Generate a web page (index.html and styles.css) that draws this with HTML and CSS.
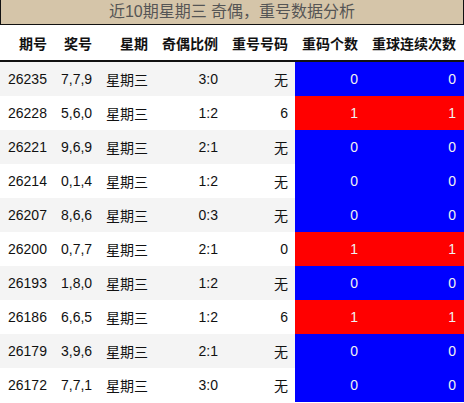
FILE: index.html
```html
<!DOCTYPE html>
<html lang="zh">
<head>
<meta charset="utf-8">
<link rel="stylesheet" href="styles.css">
</head>
<body>
<div class="wrap">
  <div class="title">近10期星期三 奇偶，重号数据分析</div>
  <table class="grid">
    <colgroup>
      <col class="c1"><col class="c2"><col class="c3"><col class="c4"><col class="c5"><col class="c6"><col class="c7">
    </colgroup>
    <thead>
      <tr><th>期号</th><th>奖号</th><th>星期</th><th>奇偶比例</th><th>重号号码</th><th>重码个数</th><th>重球连续次数</th></tr>
    </thead>
    <tbody>
      <tr><td>26235</td><td>7,7,9</td><td>星期三</td><td>3:0</td><td>无</td><td class="b">0</td><td class="b">0</td></tr>
      <tr><td>26228</td><td>5,6,0</td><td>星期三</td><td>1:2</td><td>6</td><td class="r">1</td><td class="r">1</td></tr>
      <tr><td>26221</td><td>9,6,9</td><td>星期三</td><td>2:1</td><td>无</td><td class="b">0</td><td class="b">0</td></tr>
      <tr><td>26214</td><td>0,1,4</td><td>星期三</td><td>1:2</td><td>无</td><td class="b">0</td><td class="b">0</td></tr>
      <tr><td>26207</td><td>8,6,6</td><td>星期三</td><td>0:3</td><td>无</td><td class="b">0</td><td class="b">0</td></tr>
      <tr><td>26200</td><td>0,7,7</td><td>星期三</td><td>2:1</td><td>0</td><td class="r">1</td><td class="r">1</td></tr>
      <tr><td>26193</td><td>1,8,0</td><td>星期三</td><td>1:2</td><td>无</td><td class="b">0</td><td class="b">0</td></tr>
      <tr><td>26186</td><td>6,6,5</td><td>星期三</td><td>1:2</td><td>6</td><td class="r">1</td><td class="r">1</td></tr>
      <tr><td>26179</td><td>3,9,6</td><td>星期三</td><td>2:1</td><td>无</td><td class="b">0</td><td class="b">0</td></tr>
      <tr><td>26172</td><td>7,7,1</td><td>星期三</td><td>3:0</td><td>无</td><td class="b">0</td><td class="b">0</td></tr>
    </tbody>
  </table>
</div>
</body>
</html>
```
FILE: styles.css
```css
html, body {
  margin: 0;
  padding: 0;
  background: #ffffff;
}
body {
  font-family: "Liberation Sans", Arial, "Noto Sans CJK SC", sans-serif;
  color: #111111;
}
.wrap {
  width: 464px;
}
.title {
  box-sizing: border-box;
  height: 25px;
  background: #d5c5a9;
  border: 1px solid #111;
  border-top: none;
  color: #555555;
  font-size: 16px;
  line-height: 23px;
  text-align: center;
}
.grid {
  width: 464px;
  border-collapse: collapse;
  table-layout: fixed;
  font-size: 14px;
}
.c1 { width: 54px; }
.c2 { width: 45px; }
.c3 { width: 56px; }
.c4 { width: 70px; }
.c5 { width: 70px; }
.c6 { width: 70px; }
.c7 { width: 99px; }
.grid th {
  height: 35px;
  padding: 0 7px;
  text-align: right;
  font-weight: bold;
  border-bottom: 2px solid #111;
  vertical-align: middle;
}
.grid td {
  height: 34px;
  padding: 0 7px;
  text-align: right;
  vertical-align: middle;
}
.grid td:nth-child(2),
.grid td:nth-child(3) {
  text-align: left;
}
.grid td:first-child {
  padding-left: 8px;
  text-align: left;
}
.grid tbody tr:nth-child(odd) {
  background: #f4f4f4;
}
.grid td.b {
  background: #0000ff;
  color: #f2f2f2;
}
.grid td.r {
  background: #ff0000;
  color: #f2f2f2;
}
.grid td:last-child, .grid th:last-child {
  padding-right: 8px;
}
```
